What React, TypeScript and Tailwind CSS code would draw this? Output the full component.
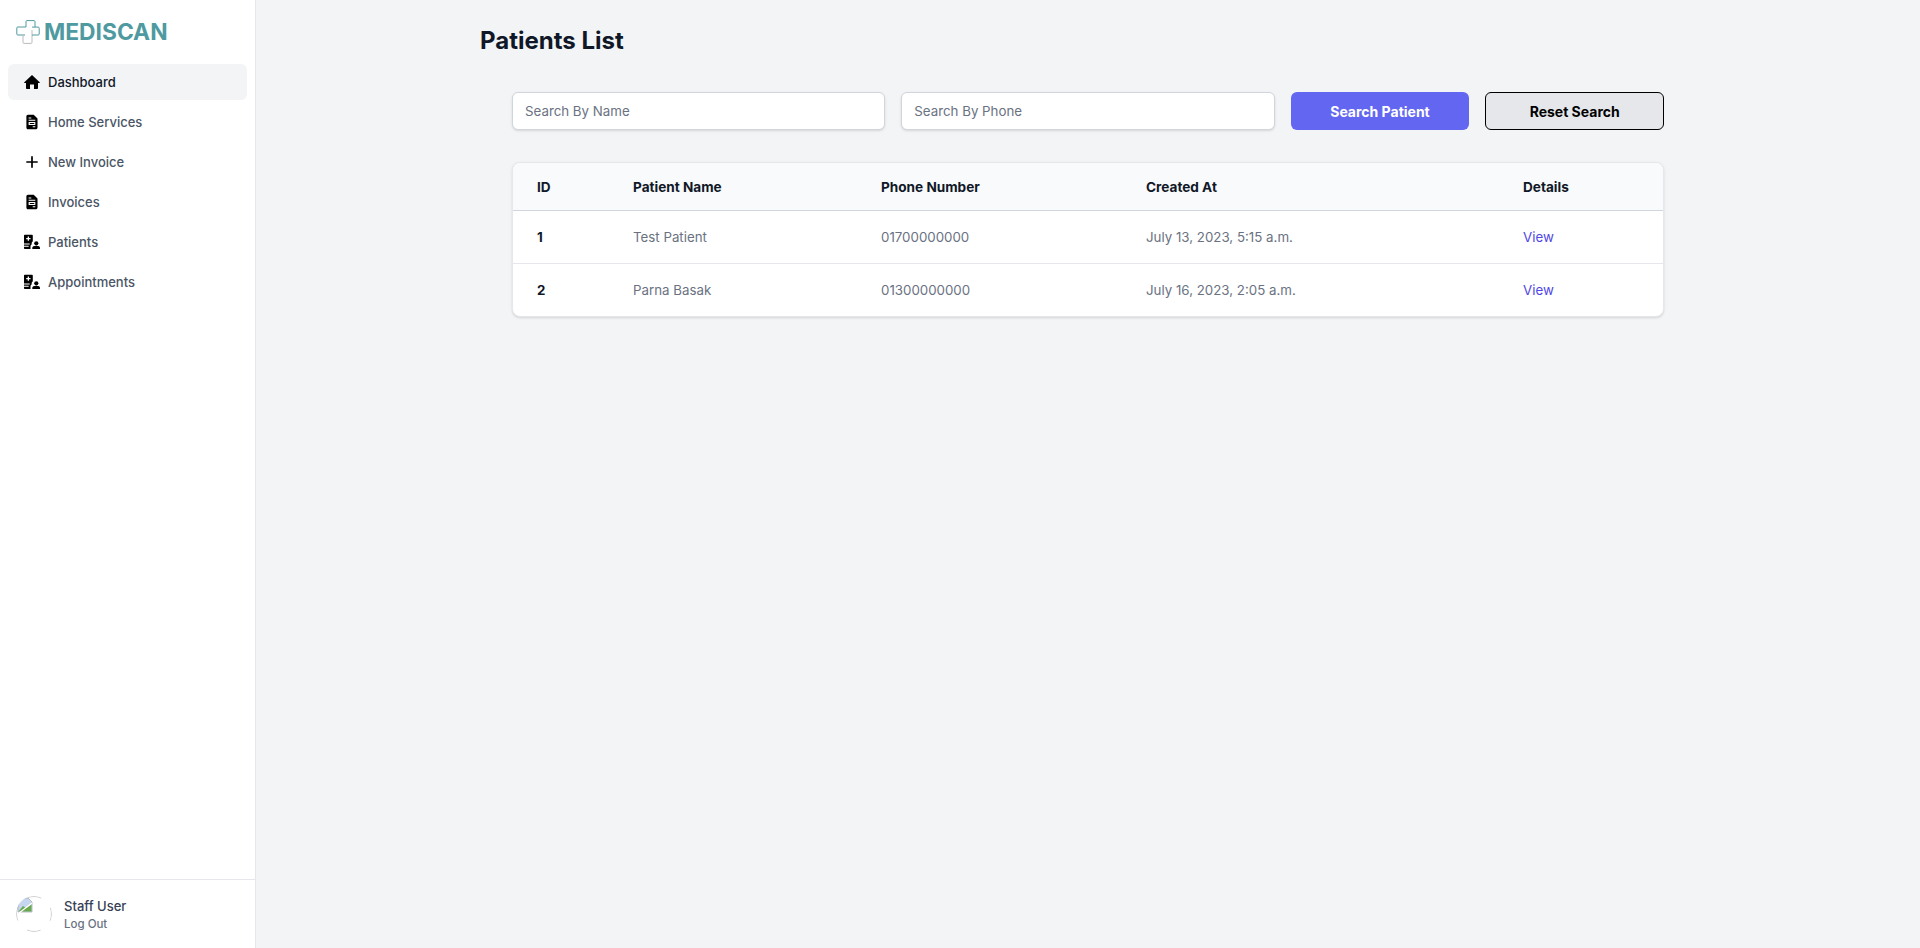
import React from 'react'

const font = "font-['Inter','Noto_Sans',sans-serif]"

function HomeIcon() {
  return (
    <svg viewBox="0 0 16 16" className="h-4 w-4 shrink-0" fill="#000">
      <path d="M8 1 0.300 8.300c-.3.3-.1.8.3.8H2v5.100c0 .5.3.8.8.8h3.200V10.500h4V15h3.200c.5 0 .8-.3.8-.8V9.100h1.400c.4 0 .6-.5.3-.8Z" />
    </svg>
  )
}

function DocIcon() {
  return (
    <svg viewBox="0 0 16 16" className="h-4 w-4 shrink-0">
      <path fill="#000" d="M4 .8H9.700L13.500 4.600V13.400C13.500 14.500 12.700 15.200 11.700 15.200H4C3 15.200 2.400 14.500 2.400 13.400V2.500C2.400 1.500 3 .8 4 .8Z" />
      <path fill="#fff" d="M4.600 3.500h2.700v1.100H4.600zM4.600 5.800h6.700v1H4.600zM4.600 8h6.700v3H4.600zM8.700 12.200h2.600v1H8.700z" />
      <path fill="#000" d="M5.800 9h4.500v1H5.800z" />
    </svg>
  )
}

function PlusIcon() {
  return (
    <svg viewBox="0 0 16 16" className="h-4 w-4 shrink-0" fill="none" stroke="#000" strokeWidth="1.700">
      <path d="M8 2.300v11.400M2.300 8h11.400" />
    </svg>
  )
}

function PatientIcon() {
  return (
    <svg viewBox="0 0 16 16" className="h-4 w-4 shrink-0">
      <path fill="#000" d="M1 .7h6.800c.6 0 1 .4 1 1v5.600c-1 .8-1.400 1.800-1 3-.9.5-1.300 1.400-1.300 2.400V15H1c-.6 0-1-.4-1-1V1.700C0 1.100.400.700 1 .7Z" />
      <path fill="#fff" d="M3.700 2.500h1.300v1.500h1.500v1.300H5v1.500H3.700V5.300H2.200V4H3.700zM0 9.400h5.700v1H0zM0 11.800h4.700v1H0z" />
      <circle cx="12.300" cy="9.300" r="2.100" fill="#000" />
      <path fill="#000" d="M8.300 15v-1.200c0-1.200 1.500-2 4-2s3.700.8 3.700 2V15Z" />
    </svg>
  )
}

const navItems = [
  { label: 'Dashboard', icon: <HomeIcon />, active: true },
  { label: 'Home Services', icon: <DocIcon /> },
  { label: 'New Invoice', icon: <PlusIcon /> },
  { label: 'Invoices', icon: <DocIcon /> },
  { label: 'Patients', icon: <PatientIcon /> },
  { label: 'Appointments', icon: <PatientIcon /> },
]

const patients = [
  { id: 1, name: 'Test Patient', phone: '01700000000', created: 'July 13, 2023, 5:15 a.m.' },
  { id: 2, name: 'Parna Basak', phone: '01300000000', created: 'July 16, 2023, 2:05 a.m.' },
]

export default function App() {
  return (
    <div className={`flex h-[948px] bg-gray-100 ${font}`}>
      {/* Sidebar */}
      <aside className="flex w-64 shrink-0 flex-col border-r border-gray-200 bg-white">
        <div className="flex h-16 items-center pl-4">
          <svg viewBox="0 0 24 24" className="h-6 w-6 shrink-0" fill="none" strokeWidth="1">
            <path stroke="#4f9aa0" strokeLinejoin="round" d="M9 15H1.800c-.6 0-1-.4-1-1V8c0-.6.4-1 1-1H10V1.600c0-.6.4-1 1-1h7c.6 0 1 .4 1 1V7" />
            <path stroke="#b9bcc0" strokeLinejoin="round" d="M7 15.500V22.400c0 .6.4 1 1 1h7c.6 0 1-.4 1-1V10" />
            <path stroke="#4f9aa0" strokeLinejoin="round" d="M16 7.100h6.200c.6 0 1 .4 1 1V14c0 .6-.4 1-1 1H16" />
          </svg>
          <span className="ml-[4px] text-[22.800px] leading-none font-bold text-[#4f9aa0]">MEDISCAN</span>
        </div>
        <nav className="flex flex-col gap-1 px-2">
          {navItems.map((item) => (
            <a
              key={item.label}
              className={`flex h-9 items-center gap-2 rounded-md px-4 text-[13px] font-medium ${
                item.active ? 'bg-gray-100 text-gray-900' : 'text-gray-600'
              }`}
            >
              {item.icon}
              <span className="pt-[2px]">{item.label}</span>
            </a>
          ))}
        </nav>
        <div className="mt-auto flex h-[69px] items-center gap-3 border-t border-gray-200 px-4">
          <div className="h-9 w-9 shrink-0 overflow-hidden rounded-full">
            {/* broken avatar image, its frame clipped by the round corners */}
            <svg viewBox="0 0 36 36" className="h-9 w-9">
              <circle cx="18" cy="18" r="17.500" fill="none" stroke="#c4c4c4" strokeWidth="0.800" strokeDasharray="14 13.490" strokeDashoffset="7" />
              <path d="M2 2h10l4 4v10H2Z" fill="#c5d6ee" stroke="#aab0b8" strokeWidth="0.800" />
              <path d="M2.500 15.500 7 10l3 2 5.500-3.500v7Z" fill="#6aa84f" />
              <path d="M3 17 16 7" stroke="#fff" strokeWidth="1.200" />
            </svg>
          </div>
          <div>
            <p className="text-[13px] leading-5 font-medium text-gray-700">Staff User</p>
            <p className="text-[11.500px] leading-4 font-medium text-gray-500">Log Out</p>
          </div>
        </div>
      </aside>

      {/* Main */}
      <main className="min-w-0 flex-1">
        <div className="mx-auto max-w-7xl px-8">
          <h1 className="pt-[25px] text-2xl font-bold text-gray-900">Patients List</h1>
          <div className="px-8">
            <form className="mt-[35px] grid grid-cols-6 gap-4">
              <input
                placeholder="Search By Name"
                className="col-span-2 h-[38px] rounded-md border border-gray-300 bg-white px-3 text-[13.300px] shadow-sm placeholder:text-gray-500"
              />
              <input
                placeholder="Search By Phone"
                className="col-span-2 h-[38px] rounded-md border border-gray-300 bg-white px-3 text-[13.300px] shadow-sm placeholder:text-gray-500"
              />
              <button type="button" className="h-[38px] rounded-md bg-[#6366f1] pt-px text-sm font-bold text-white">
                Search Patient
              </button>
              <button type="button" className="h-[38px] rounded-md border border-black bg-gray-200 pt-px text-sm font-bold text-black">
                Reset Search
              </button>
            </form>

            <div className="mt-8 overflow-hidden rounded-lg border border-gray-200 bg-white shadow">
              <table className="w-full table-fixed text-left text-[13.300px]">
                <thead className="bg-gray-50">
                  <tr className="h-[47px] border-b border-gray-300 text-[13.600px] text-gray-900">
                    <th className="w-[96px] px-6 pt-[2px] font-bold">ID</th>
                    <th className="w-[248px] px-6 pt-[2px] font-bold">Patient Name</th>
                    <th className="w-[265px] px-6 pt-[2px] font-bold">Phone Number</th>
                    <th className="w-[377px] px-6 pt-[2px] font-bold">Created At</th>
                    <th className="px-6 pt-[2px] font-bold">Details</th>
                  </tr>
                </thead>
                <tbody>
                  {patients.map((p, i) => (
                    <tr key={p.id} className={`h-[53px] ${i > 0 ? 'border-t border-gray-200' : ''}`}>
                      <td className="px-6 pt-[2px] font-bold text-gray-900">{p.id}</td>
                      <td className="px-6 pt-[2px] text-gray-500">{p.name}</td>
                      <td className="px-6 pt-[2px] text-gray-500">{p.phone}</td>
                      <td className="px-6 pt-[2px] text-gray-500">{p.created}</td>
                      <td className="px-6 pt-[2px]">
                        <a className="text-[#4f46e5]">View</a>
                      </td>
                    </tr>
                  ))}
                </tbody>
              </table>
            </div>
          </div>
        </div>
      </main>
    </div>
  )
}
